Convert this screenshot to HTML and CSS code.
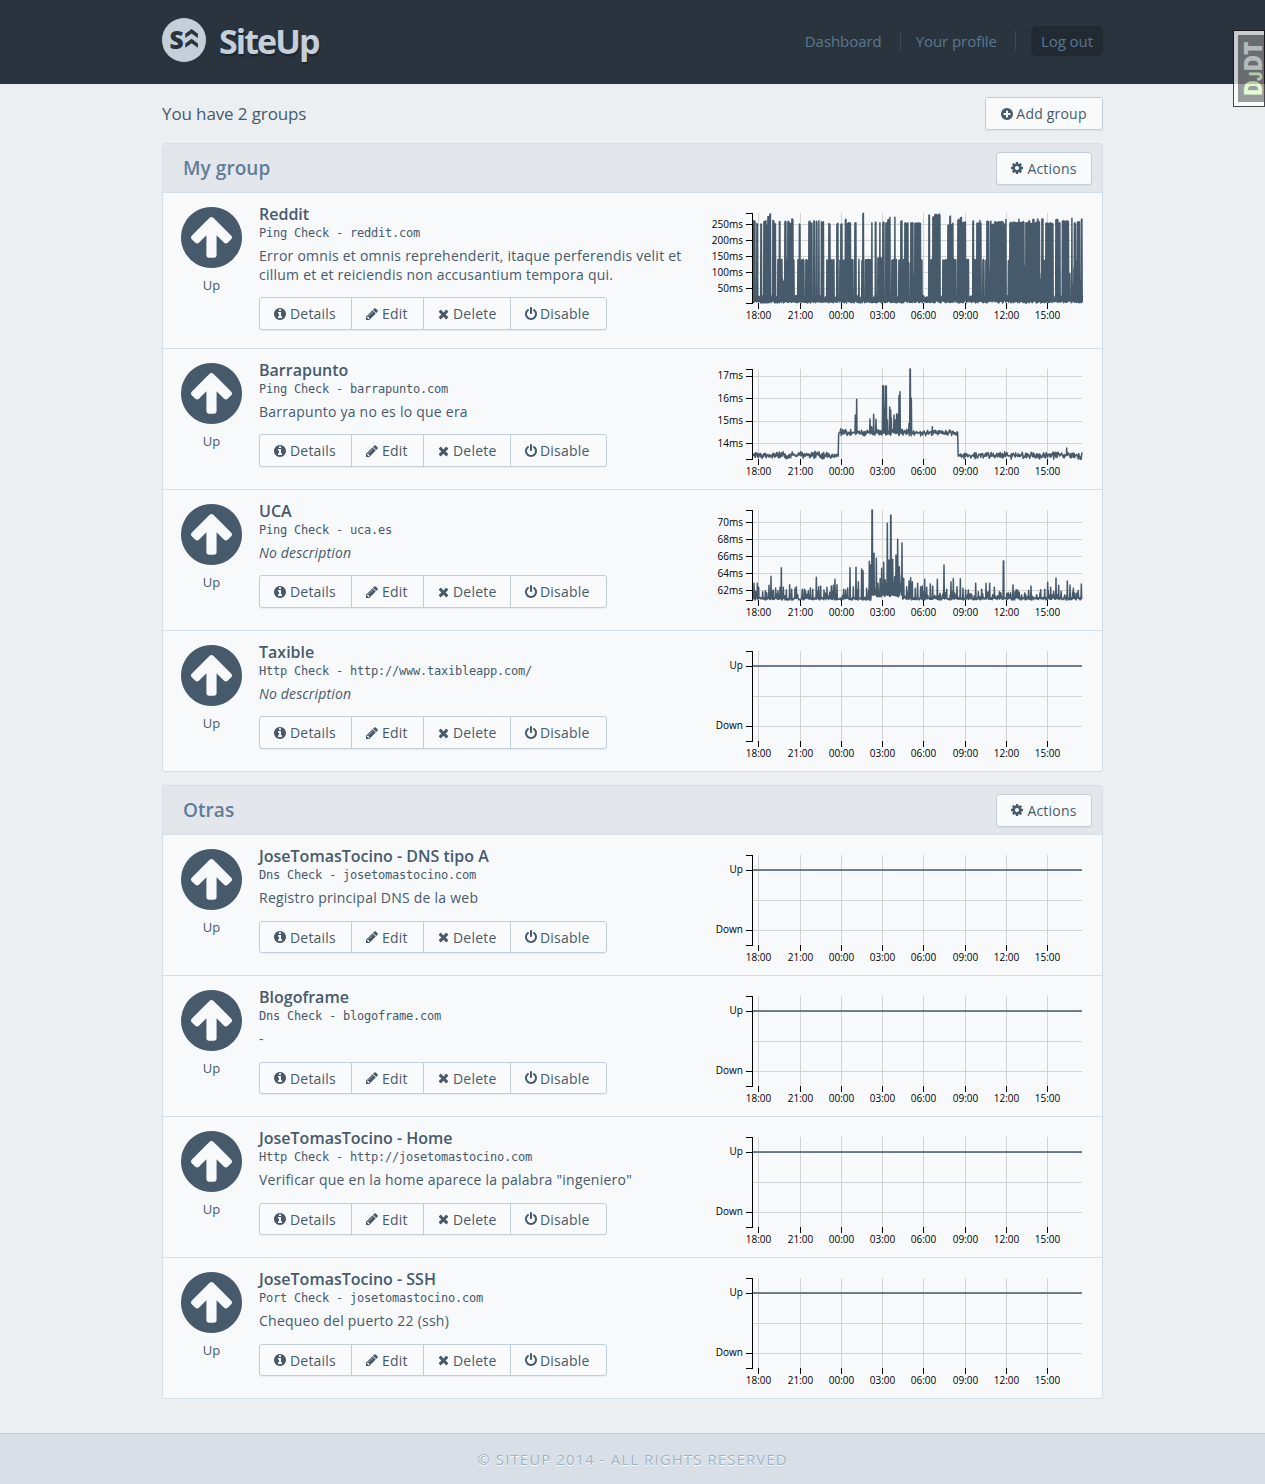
FILE: index.html
```html
<!DOCTYPE html>
<html lang="en">
<head>
<meta charset="utf-8">
<title>SiteUp - Dashboard</title>
<link rel="stylesheet" href="styles.css">
</head>
<body>
<svg class="sprite" aria-hidden="true">
  <symbol id="i-up" viewBox="128 128 1536 1536"><path d="M1412 895q0-27-18-45l-362-362-91-91q-18-18-45-18t-45 18l-91 91-362 362q-18 18-18 45t18 45l91 91q18 18 45 18t45-18l189-189v502q0 26 19 45t45 19h128q26 0 45-19t19-45v-502l189 189q19 19 45 19t45-19l91-91q18-18 18-45zm252 1q0 209-103 385.5t-279.5 279.5-385.5 103-385.5-103-279.5-279.5-103-385.5 103-385.5 279.5-279.5 385.5-103 385.5 103 279.5 279.5 103 385.5z"/></symbol>
  <symbol id="i-plus" viewBox="128 0 1536 1792"><path d="M1344 960v-128q0-26-19-45t-45-19h-256v-256q0-26-19-45t-45-19h-128q-26 0-45 19t-19 45v256h-256q-26 0-45 19t-19 45v128q0 26 19 45t45 19h256v256q0 26 19 45t45 19h128q26 0 45-19t19-45v-256h256q26 0 45-19t19-45zm320-64q0 209-103 385.5t-279.5 279.5-385.5 103-385.5-103-279.5-279.5-103-385.5 103-385.5 279.5-279.5 385.5-103 385.5 103 279.5 279.5 103 385.5z"/></symbol>
  <symbol id="i-info" viewBox="128 0 1536 1792"><path d="M1152 1376v-160q0-14-9-23t-23-9h-96v-512q0-14-9-23t-23-9h-320q-14 0-23 9t-9 23v160q0 14 9 23t23 9h96v320h-96q-14 0-23 9t-9 23v160q0 14 9 23t23 9h448q14 0 23-9t9-23zm-128-896v-160q0-14-9-23t-23-9h-192q-14 0-23 9t-9 23v160q0 14 9 23t23 9h192q14 0 23-9t9-23zm640 416q0 209-103 385.5t-279.5 279.5-385.5 103-385.5-103-279.5-279.5-103-385.5 103-385.5 279.5-279.5 385.5-103 385.5 103 279.5 279.5 103 385.5z"/></symbol>
  <symbol id="i-cog" viewBox="128 0 1536 1792"><path d="M1152 896q0-106-75-181t-181-75-181 75-75 181 75 181 181 75 181-75 75-181zm512-109v222q0 12-8 23t-20 13l-185 28q-19 54-39 91 35 50 107 138 10 12 10 25t-9 23q-27 37-99 108t-94 71q-12 0-26-9l-138-108q-44 23-91 38-16 136-29 186-7 28-36 28h-222q-14 0-24.5-8.500t-11.500-21.500l-28-184q-49-16-90-37l-141 107q-10 9-25 9-14 0-25-11-126-114-165-168-7-10-7-23 0-12 8-23 15-21 51-66.500t54-70.500q-27-50-41-99l-183-27q-13-2-21-12.500t-8-23.500v-222q0-12 8-23t19-13l186-28q14-46 39-92-40-57-107-138-10-12-10-24 0-10 9-23 26-36 98.500-107.500t94.500-71.500q13 0 26 10l138 107q44-23 91-38 16-136 29-186 7-28 36-28h222q14 0 24.500 8.500t11.500 21.500l28 184q49 16 90 37l142-107q9-9 24-9 13 0 25 10 129 119 165 170 7 8 7 22 0 12-8 23-15 21-51 66.500t-54 70.500q26 50 41 98l183 28q13 2 21 12.500t8 23.500z"/></symbol>
  <symbol id="i-pencil" viewBox="128 0 1536 1792"><path d="M491 1536l91-91-235-235-91 91v107h128v128h107zm523-928q0-22-22-22-10 0-17 7l-542 542q-7 7-7 17 0 22 22 22 10 0 17-7l542-542q7-7 7-17zm-54-192l416 416-832 832h-416v-416zm683 96q0 53-37 90l-166 166-416-416 166-165q36-38 90-38 53 0 91 38l235 234q37 39 37 91z"/></symbol>
  <symbol id="i-times" viewBox="192 0 1408 1792"><path d="M1490 1322q0 40-28 68l-136 136q-28 28-68 28t-68-28l-294-294-294 294q-28 28-68 28t-68-28l-136-136q-28-28-28-68t28-68l294-294-294-294q-28-28-28-68t28-68l136-136q28-28 68-28t68 28l294 294 294-294q28-28 68-28t68 28l136 136q28 28 28 68t-28 68l-294 294 294 294q28 28 28 68z"/></symbol>
  <symbol id="i-power" viewBox="128 0 1536 1792"><path d="M1664 896q0 156-61 298t-164 245-245 164-298 61-298-61-245-164-164-245-61-298q0-182 80.500-343t226.500-270q43-32 95.500-25t83.500 50q32 42 24.500 94.500t-49.500 84.500q-98 74-151.500 181t-53.500 228q0 104 40.500 198.500t109.500 163.500 163.500 109.500 198.500 40.500 198.500-40.500 163.500-109.500 109.500-163.500 40.500-198.500q0-121-53.500-228t-151.500-181q-42-32-49.500-84.500t24.500-94.500q31-43 84-50t95 25q146 109 226.500 270t80.500 343zm-640-768v640q0 52-38 90t-90 38-90-38-38-90v-640q0-52 38-90t90-38 90 38 38 90z"/></symbol>
</svg>

<header class="top">
  <div class="wrap top-inner">
    <a class="brand">
      <svg class="logo" viewBox="0 0 44 44"><circle cx="22" cy="22" r="22"/><text x="7.500" y="31">S</text><path d="M23.300 20v-4.200l6.300-4.800 6.300 4.800V20l-6.300-4.500zM23.300 29.700v-4.200l6.300-4.800 6.300 4.800v4.200l-6.300-4.500z"/></svg>
      <span class="brand-name">SiteUp</span>
    </a>
    <nav class="nav"><a>Dashboard</a><a>Your profile</a><a class="logout">Log out</a></nav>
  </div>
</header>

<main class="wrap main">
  <div class="summary"><p>You have 2 groups</p><a class="btn add"><svg class="ic"><use href="#i-plus"/></svg>Add group</a></div>

  <section class="group">
    <header class="group-head"><h2>My group</h2><a class="btn actions"><svg class="ic"><use href="#i-cog"/></svg>Actions</a></header>

    <article class="check">
      <div class="status"><svg><use href="#i-up"/></svg><span>Up</span></div>
      <div class="info">
        <h3>Reddit</h3><p class="kind">Ping Check - reddit.com</p>
        <p class="desc">Error omnis et omnis reprehenderit, itaque perferendis velit et cillum et et reiciendis non accusantium tempora qui.</p>
        <div class="btns"><a><svg class="ic"><use href="#i-info"/></svg>Details</a><a><svg class="ic"><use href="#i-pencil"/></svg>Edit</a><a><svg class="ic x"><use href="#i-times"/></svg>Delete</a><a><svg class="ic p"><use href="#i-power"/></svg>Disable</a></div>
      </div>
      <svg class="chart" data-series="reddit"></svg>
    </article>

    <article class="check">
      <div class="status"><svg><use href="#i-up"/></svg><span>Up</span></div>
      <div class="info">
        <h3>Barrapunto</h3><p class="kind">Ping Check - barrapunto.com</p>
        <p class="desc">Barrapunto ya no es lo que era</p>
        <div class="btns"><a><svg class="ic"><use href="#i-info"/></svg>Details</a><a><svg class="ic"><use href="#i-pencil"/></svg>Edit</a><a><svg class="ic x"><use href="#i-times"/></svg>Delete</a><a><svg class="ic p"><use href="#i-power"/></svg>Disable</a></div>
      </div>
      <svg class="chart" data-series="barrapunto"></svg>
    </article>

    <article class="check">
      <div class="status"><svg><use href="#i-up"/></svg><span>Up</span></div>
      <div class="info">
        <h3>UCA</h3><p class="kind">Ping Check - uca.es</p>
        <p class="desc none">No description</p>
        <div class="btns"><a><svg class="ic"><use href="#i-info"/></svg>Details</a><a><svg class="ic"><use href="#i-pencil"/></svg>Edit</a><a><svg class="ic x"><use href="#i-times"/></svg>Delete</a><a><svg class="ic p"><use href="#i-power"/></svg>Disable</a></div>
      </div>
      <svg class="chart" data-series="uca"></svg>
    </article>

    <article class="check">
      <div class="status"><svg><use href="#i-up"/></svg><span>Up</span></div>
      <div class="info">
        <h3>Taxible</h3><p class="kind">Http Check - http://www.taxibleapp.com/</p>
        <p class="desc none">No description</p>
        <div class="btns"><a><svg class="ic"><use href="#i-info"/></svg>Details</a><a><svg class="ic"><use href="#i-pencil"/></svg>Edit</a><a><svg class="ic x"><use href="#i-times"/></svg>Delete</a><a><svg class="ic p"><use href="#i-power"/></svg>Disable</a></div>
      </div>
      <svg class="chart" data-series="status"></svg>
    </article>
  </section>

  <section class="group">
    <header class="group-head"><h2>Otras</h2><a class="btn actions"><svg class="ic"><use href="#i-cog"/></svg>Actions</a></header>

    <article class="check">
      <div class="status"><svg><use href="#i-up"/></svg><span>Up</span></div>
      <div class="info">
        <h3>JoseTomasTocino - DNS tipo A</h3><p class="kind">Dns Check - josetomastocino.com</p>
        <p class="desc">Registro principal DNS de la web</p>
        <div class="btns"><a><svg class="ic"><use href="#i-info"/></svg>Details</a><a><svg class="ic"><use href="#i-pencil"/></svg>Edit</a><a><svg class="ic x"><use href="#i-times"/></svg>Delete</a><a><svg class="ic p"><use href="#i-power"/></svg>Disable</a></div>
      </div>
      <svg class="chart" data-series="status"></svg>
    </article>

    <article class="check">
      <div class="status"><svg><use href="#i-up"/></svg><span>Up</span></div>
      <div class="info">
        <h3>Blogoframe</h3><p class="kind">Dns Check - blogoframe.com</p>
        <p class="desc">-</p>
        <div class="btns"><a><svg class="ic"><use href="#i-info"/></svg>Details</a><a><svg class="ic"><use href="#i-pencil"/></svg>Edit</a><a><svg class="ic x"><use href="#i-times"/></svg>Delete</a><a><svg class="ic p"><use href="#i-power"/></svg>Disable</a></div>
      </div>
      <svg class="chart" data-series="status"></svg>
    </article>

    <article class="check">
      <div class="status"><svg><use href="#i-up"/></svg><span>Up</span></div>
      <div class="info">
        <h3>JoseTomasTocino - Home</h3><p class="kind">Http Check - http://josetomastocino.com</p>
        <p class="desc">Verificar que en la home aparece la palabra "ingeniero"</p>
        <div class="btns"><a><svg class="ic"><use href="#i-info"/></svg>Details</a><a><svg class="ic"><use href="#i-pencil"/></svg>Edit</a><a><svg class="ic x"><use href="#i-times"/></svg>Delete</a><a><svg class="ic p"><use href="#i-power"/></svg>Disable</a></div>
      </div>
      <svg class="chart" data-series="status"></svg>
    </article>

    <article class="check">
      <div class="status"><svg><use href="#i-up"/></svg><span>Up</span></div>
      <div class="info">
        <h3>JoseTomasTocino - SSH</h3><p class="kind">Port Check - josetomastocino.com</p>
        <p class="desc">Chequeo del puerto 22 (ssh)</p>
        <div class="btns"><a><svg class="ic"><use href="#i-info"/></svg>Details</a><a><svg class="ic"><use href="#i-pencil"/></svg>Edit</a><a><svg class="ic x"><use href="#i-times"/></svg>Delete</a><a><svg class="ic p"><use href="#i-power"/></svg>Disable</a></div>
      </div>
      <svg class="chart" data-series="status"></svg>
    </article>
  </section>
</main>

<footer class="foot">© SITEUP 2014 - ALL RIGHTS RESERVED</footer>

<aside class="djdt"><svg viewBox="0 0 26 67"><g transform="translate(24 60) rotate(-90)"><text class="g" x="-1.300" textLength="16" lengthAdjust="spacingAndGlyphs">D</text><text class="g j" x="14" textLength="9.500" lengthAdjust="spacingAndGlyphs">J</text><text x="23.500" textLength="30" lengthAdjust="spacingAndGlyphs">DT</text></g></svg></aside>

<script src="charts.js"></script>
</body>
</html>
```

FILE: styles.css
```css
* { box-sizing: border-box; }
body {
  margin: 0;
  min-height: 1484px;
  display: flex;
  flex-direction: column;
  background: #ebeff2;
  color: #475a6b;
  font: 14px/19px "Open Sans", sans-serif;
}
h2, h3, p { margin: 0; }
svg { display: block; }
.sprite { display: none; }
.wrap { width: 941px; margin: 0 auto; }

.top { height: 84px; background: #2a343e; }
.top-inner { height: 84px; display: flex; justify-content: space-between; align-items: center; }
.brand { display: flex; align-items: center; gap: 13px; }
.logo { width: 44px; height: 44px; margin-bottom: 4px; fill: #c4cfda; }
.logo text, .logo path { fill: #2a343e; }
.logo text { font: 800 24.5px "Open Sans", sans-serif; }
.brand-name {
  margin-bottom: 2px;
  font-size: 34px;
  line-height: 44px;
  font-weight: 700;
  letter-spacing: -1.95px;
  color: #c4cfda;
  text-shadow: 1px 2px 1px #1d242b;
}
.nav { display: flex; align-items: center; margin-bottom: 2px; font-size: 15px; line-height: 20px; letter-spacing: -.06px; color: #5b7791; }
.nav a + a { margin-left: 15px; }
.nav a:not(.logout) { padding-right: 19px; background: linear-gradient(#3a4856, #3a4856) right / 1px 20px no-repeat; }
.nav .logout { padding: 5px 10px; background: #212932; border-radius: 5px; }

.main { flex: 1; }
.summary { height: 59px; display: flex; justify-content: space-between; align-items: center; font-size: 17px; letter-spacing: -.12px; }
.btn, .btns {
  display: flex;
  align-items: center;
  height: 33px;
  border: 1px solid #c3ced9;
  border-radius: 3px;
  background: #f9fafc;
  box-shadow: 0 1px 1px rgba(71, 90, 107, .08);
  font-size: 14px;
  letter-spacing: .2px;
}
.btn { justify-content: center; }
.add { width: 118px; }
.actions { width: 96px; }
.ic { width: 12px; height: 14px; margin-right: 4px; fill: #475a6b; }
.add .ic { margin-right: 3px; }
.ic.x { width: 11px; }
.ic.p { margin-right: 3px; }

.group { border: 1px solid #d7dfe6; border-radius: 3px; background: #f7f9fb; margin-bottom: 13px; }
.group-head {
  height: 49px;
  display: flex;
  align-items: center;
  justify-content: space-between;
  padding: 0 10px 0 20px;
  background: #e3e6ea;
  border-bottom: 1px solid #d7dfe6;
}
.group-head h2 { font-size: 19px; line-height: 26px; font-weight: 600; letter-spacing: .06px; color: #5f7d98; }
.check { display: flex; min-height: 141px; border-bottom: 1px solid #d7dfe6; }
.check:last-child { border-bottom: 0; min-height: 140px; }
.status { width: 96px; padding: 14px 0 0 18px; }
.status svg { width: 61px; height: 61px; fill: #475a6b; }
.status span { display: block; width: 61px; margin-top: 8px; text-align: center; font-size: 13px; }
.info { width: 441px; padding: 11px 0 18px; }
.info h3 { font-size: 16px; line-height: 20px; font-weight: 600; }
.kind { padding-top: 1px; font: 12px/16px "DejaVu Sans Mono", monospace; letter-spacing: -.224px; }
.desc { margin: 5px 0 13px; letter-spacing: .24px; }
.none { font-style: italic; letter-spacing: .15px; }
.btns { width: 348px; }
.group + .group .desc { margin-bottom: 14px; }
.group + .group .btns { height: 32px; }
.btns a { display: flex; align-items: center; height: 100%; padding-left: 14px; width: 91px; }
.btns a + a { border-left: 1px solid #c3ced9; width: 72px; }
.btns a:nth-child(3) { width: 87px; }
.btns a:nth-child(4) { width: 96px; }

.chart { width: 402px; height: 130px; flex: none; }
.chart text { font: 10px "Open Sans", sans-serif; fill: #000; }
.chart .grid { stroke: #d3d3d3; fill: none; shape-rendering: crispEdges; }
.chart .axis { stroke: #000; fill: none; shape-rendering: crispEdges; }
.chart .line { stroke: #475a6b; fill: none; stroke-width: 1.5; stroke-linejoin: round; }

.foot {
  height: 51px;
  border-top: 1px solid #c1ccd6;
  background: #d8dfe6;
  color: #9fb2c6;
  text-align: center;
  font-size: 15px;
  line-height: 51px;
  letter-spacing: 1.08px;
  text-shadow: 0 1px 0 #fff;
}

.djdt {
  position: absolute;
  top: 30px;
  right: 0;
  width: 32px;
  height: 77px;
  padding: 4px 0 4px 4px;
  border: 1px solid #111;
  background: #fff;
  opacity: .75;
}
.djdt svg { width: 26px; height: 67px; background: #808080; }
.djdt text { font: 800 24.5px "Open Sans", sans-serif; fill: #e4e8ea; }
.djdt .g { fill: #e0ffc8; }
.djdt .j { font: 800 17.5px Inter, sans-serif; }
```

FILE: charts.js
```js
// Plot area inside each chart: x 52.5..382, y 20.5..110.5.
const LEFT = 52.5, RIGHT = 382, TOP = 20.5, BOTTOM = 110.5;
const HOURS = [[58.5, '18:00'], [100.5, '21:00'], [141.5, '00:00'], [182.5, '03:00'],
  [223.5, '06:00'], [265.5, '09:00'], [306.5, '12:00'], [347.5, '15:00']];

// Seeded generator, so that a series is the same on every load.
function random(seed) {
  return () => (seed = (seed * 16807) % 2147483647) / 2147483647;
}

// Series values are in thirds of a pixel: [from, to, top].
const REDDIT = [[158,166,62],[168,173,70],[181,185,70],[190,198,62],[198,202,72],[202,208,48],[208,212,40],
  [217,222,60],[224,227,70],[231,236,178],[236,241,63],[241,251,178],[252,258,63],[259,262,178],[262,268,63],
  [268,274,70],[274,279,56],[279,283,178],[291,296,178],[296,300,70],[300,313,178],[315,325,178],[325,330,62],
  [332,337,70],[339,344,62],[347,352,62],[355,358,62],[362,365,62],[366,371,62],[378,385,178],[385,391,70],
  [391,402,178],[408,414,70],[417,420,178],[420,427,70],[428,434,178],[434,439,56],[440,452,68],[452,460,178],
  [463,468,68],[468,470,178],[475,478,176],[484,487,178],[487,491,40],[494,512,178],[513,517,66],[524,529,66],
  [531,537,172],[537,541,66],[541,546,172],[547,553,66],[555,562,66],[562,566,56],[567,571,48],[573,582,178],
  [582,586,48],[586,590,178],[594,600,178],[600,606,62],
  [606,612,178],[612,624,68],[624,627,186],[630,662,68],[662,666,178],[685,689,44],[689,696,178],[697,702,50],
  [703,720,42],[726,740,178],[741,746,74],[747,752,48],[753,759,70],[759,768,178],[772,778,58],[779,785,52],
  [786,797,66],[797,806,178],[816,821,62],[821,828,178],[828,837,68],[837,841,58],[841,844,66],[846,852,178],
  [855,859,178],[859,873,62],[875,882,72],[883,909,64],[910,915,70],[916,919,58],[923,928,178],[928,955,66],
  [955,958,56],[958,965,66],[967,976,64],[976,984,68],[985,990,62],[990,996,70],[997,1002,58],[1003,1010,66],
  [1010,1015,56],[1015,1024,64],[1024,1029,56],[1029,1034,178],[1035,1060,68],[1066,1074,58],[1075,1081,68],
  [1085,1110,62],[1113,1117,54],[1117,1129,68],[1129,1142,64],[1142,1147,56]];

// [x, peak], in thirds of a pixel.
const BARRAPUNTO = [[466,180],[470,133],[510,192],[515,215],[521,178],[528,193],[548,92],[550,92],[553,160],
  [556,93],[559,93],[562,195],[569,156],[572,165],[574,190],[582,180],[586,195],[590,176],[594,180],[597,122],
  [600,110],[627,205],[630,42],[631,42],[634,130],[697,215],[1100,279]];

const UCA = [[162,250],[172,250],[176,262],[188,275],[196,272],[207,256],[213,229],[220,270],[227,264],[234,272],
  [240,262],[244,203],[250,262],[259,270],[269,254],[275,268],[285,265],[289,260],[308,268],[314,268],[325,272],
  [331,264],[338,268],[349,232],[356,260],[362,258],[372,270],[381,262],[394,258],[400,256],[405,238],[411,254],
  [431,268],[437,270],[443,264],[450,203],[460,260],[468,202],[475,245],[485,207],[489,212],[500,265],[508,184],
  [512,195],[516,30],[517,30],[522,160],[529,175],[534,250],[545,205],[551,187],[556,240],[562,70],[567,180],
  [572,46],[573,46],[578,178],[584,230],[588,165],[593,118],[598,200],[606,128],[611,235],[620,260],[627,242],
  [632,233],[637,245],[646,265],[653,250],[662,260],[667,258],[674,238],[680,262],[691,252],[698,258],[712,238],
  [720,280],[732,195],[740,268],[753,245],[760,236],[771,260],[781,236],[789,265],[797,270],[805,270],[827,250],
  [835,275],[845,268],[858,250],[869,250],[883,262],[898,275],[910,183],[911,183],[939,255],[945,275],[965,285],
  [993,258],[1020,278],[1034,268],[1043,247],[1052,262],[1068,234],[1076,256],[1102,243],[1110,255],[1120,265],
  [1130,280],[1144,252]];

const toPath = pts => 'M' + pts.map(([x, y]) => (x / 3).toFixed(2) + ' ' + (y / 3).toFixed(2)).join('L');

// Response time jumps between a floor and the top of the current burst.
function bursts() {
  const rnd = random(11), pts = [];
  let skip = 0;
  for (let x = 158; x < 1147; x += 1.5) {
    const run = REDDIT.find(r => x >= r[0] + 1 && x <= r[1] - 1);
    pts.push([x, 300 + rnd() * 9]);
    if (!skip && run && run[1] - run[0] > 8 && rnd() < .07) skip = 3;
    const top = skip ? 180 + rnd() * 100 : run && run[2] + rnd() * 4;
    if (skip) skip--;
    pts.push([x + .7, run ? Math.max(top, run[2]) : 287 + rnd() * 12]);
  }
  return pts;
}

// A noisy level with isolated peaks.
function peaks(list, level, noise, seed) {
  const rnd = random(seed), pts = [];
  let next = 0;
  for (let x = 158; x < 1147; x += 1.5) {
    pts.push([x, level(x) + noise(x, rnd)]);
    while (next < list.length && list[next][0] <= x + 1.5) {
      const [px, py] = list[next++];
      pts.push([px - 1, level(px)], [px, py], [px + 1, level(px)]);
    }
  }
  return pts;
}

// Ticks are [y, label, y of the label's baseline]. Origin is the offset of the series' coordinates.
const SERIES = {
  reddit: {
    ticks: [[31.5, '250ms', 35], [47.5, '200ms', 51], [63.5, '150ms', 67], [79.5, '100ms', 83], [95.5, '50ms', 99]],
    origin: 7,
    path: () => toPath(bursts())
  },
  barrapunto: {
    ticks: [[27.5, '17ms', 30], [49.5, '16ms', 53], [72.5, '15ms', 75], [94.5, '14ms', 98]],
    origin: 6,
    path: () => toPath(peaks(BARRAPUNTO, x => (x > 415 && x < 774 ? 233 : 301), (x, r) => (r() + r() - 1) * 12, 5))
  },
  uca: {
    ticks: [[32.5, '70ms', 36], [49.5, '68ms', 53], [66.5, '66ms', 70], [83.5, '64ms', 87], [100.5, '62ms', 104]],
    origin: 10,
    path: () => toPath(peaks(UCA, x => (x > 515 && x < 608 ? 285 : 295),
      (x, r) => (x > 505 && x < 612 ? -r() * r() * 75 + 6 : r() < .2 ? -r() * 26 : r() * 8 - 3), 23))
  },
  status: {
    ticks: [[35.5, 'Up', 38], [95.5, 'Down', 98]],
    grid: [65.5],
    origin: 0,
    path: () => 'M53 35H382'
  }
};

document.querySelectorAll('.chart').forEach(svg => {
  const s = SERIES[svg.dataset.series];
  const lines = s.ticks.map(t => t[0]).concat(s.grid || []);
  svg.innerHTML =
    `<path class="grid" d="${HOURS.map(h => `M${h[0]} ${TOP - .5}V${BOTTOM}`).join('')}${lines.map(y => `M${LEFT} ${y}H${RIGHT}`).join('')}"/>` +
    `<path class="line" transform="translate(0 ${s.origin})" d="${s.path()}"/>` +
    `<path class="axis" d="M46 ${TOP}H52.5V${BOTTOM}H46${s.ticks.map(t => `M46 ${t[0]}H52.5`).join('')}${HOURS.map(h => `M${h[0]} ${BOTTOM - .5}v6`).join('')}"/>` +
    s.ticks.map(t => `<text x="43" y="${t[2]}" text-anchor="end">${t[1]}</text>`).join('') +
    HOURS.map(h => `<text x="${h[0]}" y="126" text-anchor="middle">${h[1]}</text>`).join('');
});
```
